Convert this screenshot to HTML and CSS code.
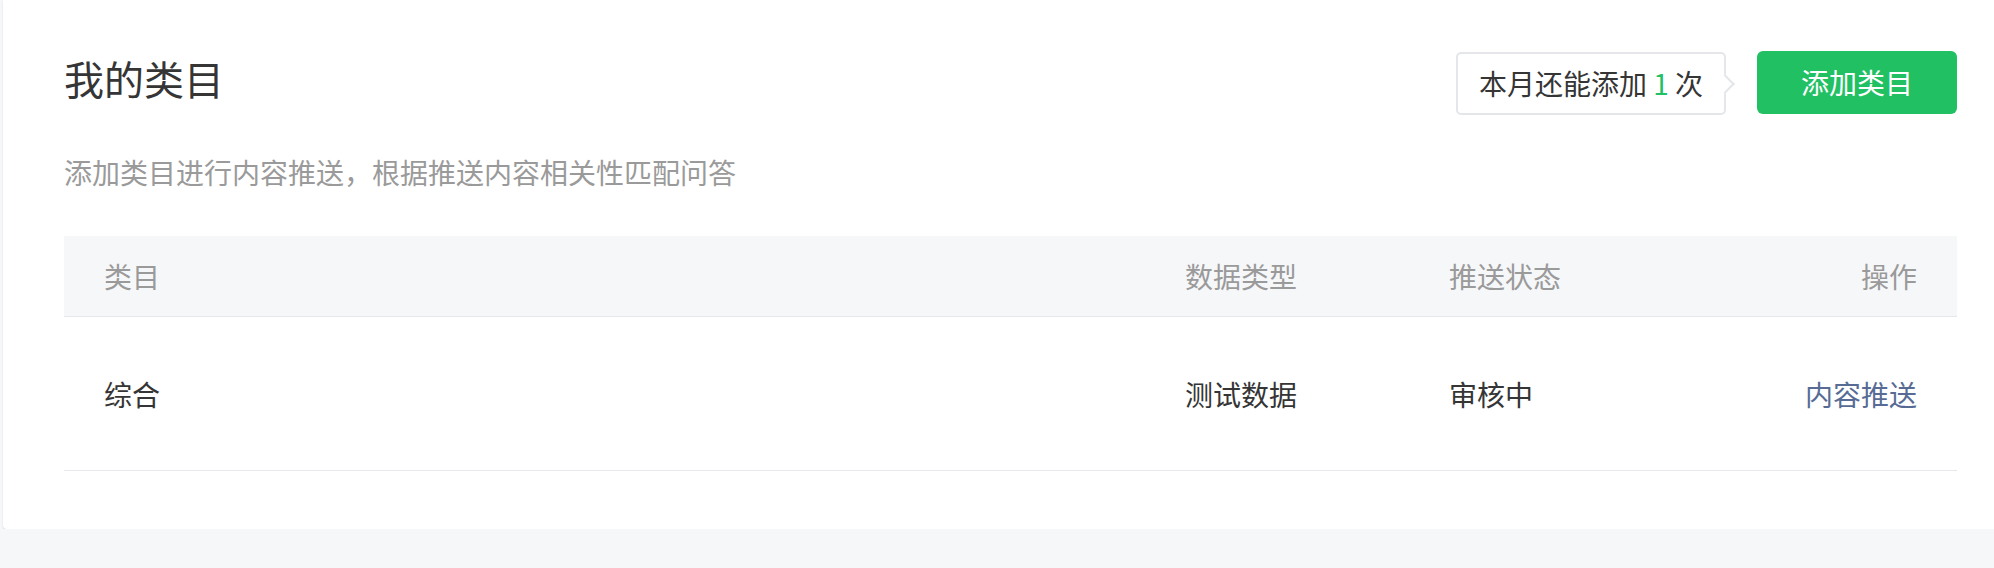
FILE: index.html
```html
<!DOCTYPE html>
<html lang="zh-CN">
<head>
<meta charset="utf-8">
<title>我的类目</title>
<link rel="stylesheet" href="styles.css">
</head>
<body>
<div class="card">
  <div class="card-head">
    <h2 class="title">我的类目</h2>
    <div class="actions">
      <div class="quota">本月还能添加 <span class="num">1</span> 次</div>
      <button class="btn-primary">添加类目</button>
    </div>
  </div>
  <p class="desc">添加类目进行内容推送，根据推送内容相关性匹配问答</p>
  <div class="table">
    <div class="tr th">
      <div class="cell">类目</div>
      <div class="cell">数据类型</div>
      <div class="cell">推送状态</div>
      <div class="cell right">操作</div>
    </div>
    <div class="tr td">
      <div class="cell">综合</div>
      <div class="cell">测试数据</div>
      <div class="cell">审核中</div>
      <div class="cell right"><a class="link" href="#">内容推送</a></div>
    </div>
  </div>
</div>
</body>
</html>
```
FILE: styles.css
```css
html, body {
  margin: 0;
  padding: 0;
  overflow: hidden;
  background: #f6f7f9;
  font-family: "Noto Sans CJK SC", "Noto Sans", sans-serif;
  color: #353535;
}
.card {
  margin-left: 3px;
  width: 2015px;
  box-sizing: border-box;
  background: #fff;
  border-radius: 0 0 4px 4px;
  box-shadow: 0 1px 2px rgba(0, 0, 0, 0.12);
  padding: 51px 61px 58px 61px;
}
.card-head {
  display: flex;
  justify-content: space-between;
  align-items: flex-start;
  height: 64px;
}
.title {
  margin: 7px 0 0 0;
  font-size: 40px;
  line-height: 40px;
  font-weight: normal;
  color: #353535;
}
.actions {
  display: flex;
  align-items: flex-start;
  gap: 31px;
}
.quota {
  position: relative;
  margin-top: 1px;
  box-sizing: border-box;
  height: 63px;
  padding: 0 21px;
  border: 2px solid #e4e6ea;
  border-radius: 5px;
  background: #fff;
  font-size: 28px;
  line-height: 59px;
  color: #353535;
  white-space: pre;
}
.quota::after {
  content: "";
  position: absolute;
  right: -8px;
  top: 23px;
  width: 12px;
  height: 12px;
  background: #fff;
  border-top: 2px solid #e4e6ea;
  border-right: 2px solid #e4e6ea;
  transform: rotate(45deg);
}
.num {
  color: #21c063;
}
.btn-primary {
  height: 63px;
  width: 200px;
  border: none;
  border-radius: 6px;
  background: #21c063;
  color: #fff;
  font-family: inherit;
  font-size: 28px;
  line-height: 63px;
  padding: 0;
}
.desc {
  margin: 43px 0 0 0;
  font-size: 28px;
  line-height: 28px;
  color: #9a9a9a;
}
.table {
  margin-top: 50px;
}
.tr {
  display: grid;
  grid-template-columns: 1fr 264px 264px 284px;
  align-items: center;
  border-bottom: 1px solid #e6e7ea;
  font-size: 28px;
  line-height: 28px;
}
.th {
  height: 80px;
  background: #f6f7f9;
  color: #9a9a9a;
}
.td {
  height: 153px;
  color: #353535;
}
.cell {
  padding: 0 40px;
}
.cell.right {
  text-align: right;
}
.link {
  color: #576b95;
  text-decoration: none;
}
```
